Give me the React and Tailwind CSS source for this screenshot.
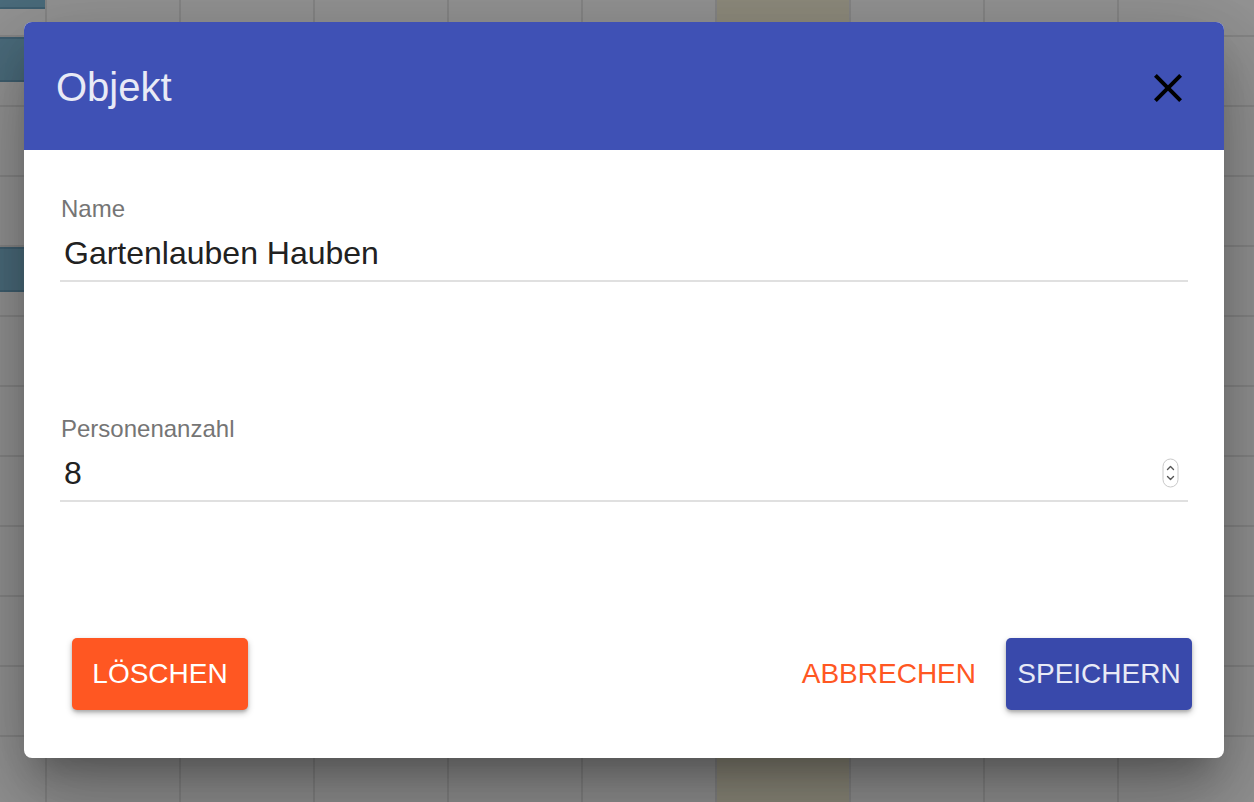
import React from "react";

const COLS = 10;
const ROWS = [35, 70, 70, 70, 70, 70, 70, 70, 70, 70, 70, 70];

function Background() {
  return (
    <div className="flex flex-col w-[1254px] h-[802px] bg-[#949494]">
      {ROWS.map((h, r) => (
        <div
          key={r}
          className={
            "flex shrink-0 " + (r === 0 ? "h-[35px]" : "h-[70px] border-t-2 border-[#868686]")
          }
        >
          {Array.from({ length: COLS }).map((_, c) => (
            <div
              key={c}
              className={
                (c === 0 ? "w-[45px] " : "w-[134px] border-l-2 border-[#868686] ") +
                (c === 6 ? "bg-[#8f8c7d] " : "") +
                "shrink-0 h-full"
              }
            >
              {c === 0 && r === 0 && (
                <div className="h-[9px] bg-[#4b6c7c] border-b-2 border-[#3f5f70]" />
              )}
              {c === 0 && (r === 1 || r === 4) && (
                <div className="h-[45px] bg-[#4b6c7c] border-y-2 border-[#3f5f70]" />
              )}
            </div>
          ))}
        </div>
      ))}
    </div>
  );
}

function Spinner() {
  return (
    <svg width="18" height="30" viewBox="0 0 18 30" className="shrink-0">
      <rect x="1" y="1" width="15" height="28" rx="7.5" fill="#fff" stroke="#c9c9c9" strokeWidth="1" />
      <path d="M5.5 11.5 L8.5 8.5 L11.5 11.5" fill="none" stroke="#555" strokeWidth="1.4" strokeLinecap="round" strokeLinejoin="round" />
      <path d="M5.5 18.5 L8.5 21.5 L11.5 18.5" fill="none" stroke="#555" strokeWidth="1.4" strokeLinecap="round" strokeLinejoin="round" />
    </svg>
  );
}

function Field({ label, value, spinner }) {
  return (
    <div className="flex flex-col">
      <div className="text-[24px] leading-[24px] text-[#757575] pl-[1px]">{label}</div>
      <div className="mt-[13px] flex items-center justify-between pb-[8px] border-b-2 border-[#e0e0e0]">
        <div className="text-[32px] leading-[38px] text-[#212121] pl-[4px]">{value}</div>
        {spinner && (
          <div className="mr-[8px]">
            <Spinner />
          </div>
        )}
      </div>
    </div>
  );
}

export default function App() {
  return (
    <div
      className="relative w-[1254px] h-[802px] overflow-hidden"
      style={{ fontFamily: '"Liberation Sans", Arial, Helvetica, sans-serif' }}
    >
      <Background />
      <div className="absolute left-[24px] top-[22px] w-[1200px] h-[736px] bg-white rounded-[8px] flex flex-col shadow-[0_22px_30px_-14px_rgba(0,0,0,0.25),0_48px_76px_6px_rgba(0,0,0,0.18),0_18px_92px_16px_rgba(0,0,0,0.14)]">
        <div className="h-[128px] shrink-0 bg-[#3f51b5] rounded-t-[8px] flex items-center justify-between pl-[32px] pr-[32px]">
          <div className="text-[40px] leading-[48px] text-[#e8eaf6] mt-[2px]">Objekt</div>
          <svg width="48" height="48" viewBox="0 0 24 24" className="mt-[4px]">
            <path
              d="M19 6.41L17.59 5 12 10.59 6.41 5 5 6.41 10.59 12 5 17.59 6.41 19 12 13.41 17.59 19 19 17.59 13.41 12z"
              fill="#000"
            />
          </svg>
        </div>
        <div className="flex-1 flex flex-col px-[36px] pt-[47px]">
          <Field label="Name" value="Gartenlauben Hauben" />
          <div className="h-[135px]" />
          <Field label="Personenanzahl" value="8" spinner />
        </div>
        <div className="flex items-center justify-between pl-[48px] pr-[32px] pb-[48px]">
          <button className="h-[72px] w-[176px] rounded-[5px] bg-[#ff5722] text-white text-[28px] leading-none shadow-[0_3px_6px_rgba(0,0,0,0.25),0_2px_3px_rgba(0,0,0,0.15)]">
            LÖSCHEN
          </button>
          <div className="flex items-center gap-[18px]">
            <button className="h-[72px] px-[12px] text-[#ff5722] text-[28px] leading-none">
              ABBRECHEN
            </button>
            <button className="h-[72px] w-[186px] rounded-[5px] bg-[#3949ab] text-[#e8eaf6] text-[28px] leading-none shadow-[0_3px_6px_rgba(0,0,0,0.25),0_2px_3px_rgba(0,0,0,0.15)]">
              SPEICHERN
            </button>
          </div>
        </div>
      </div>
    </div>
  );
}
